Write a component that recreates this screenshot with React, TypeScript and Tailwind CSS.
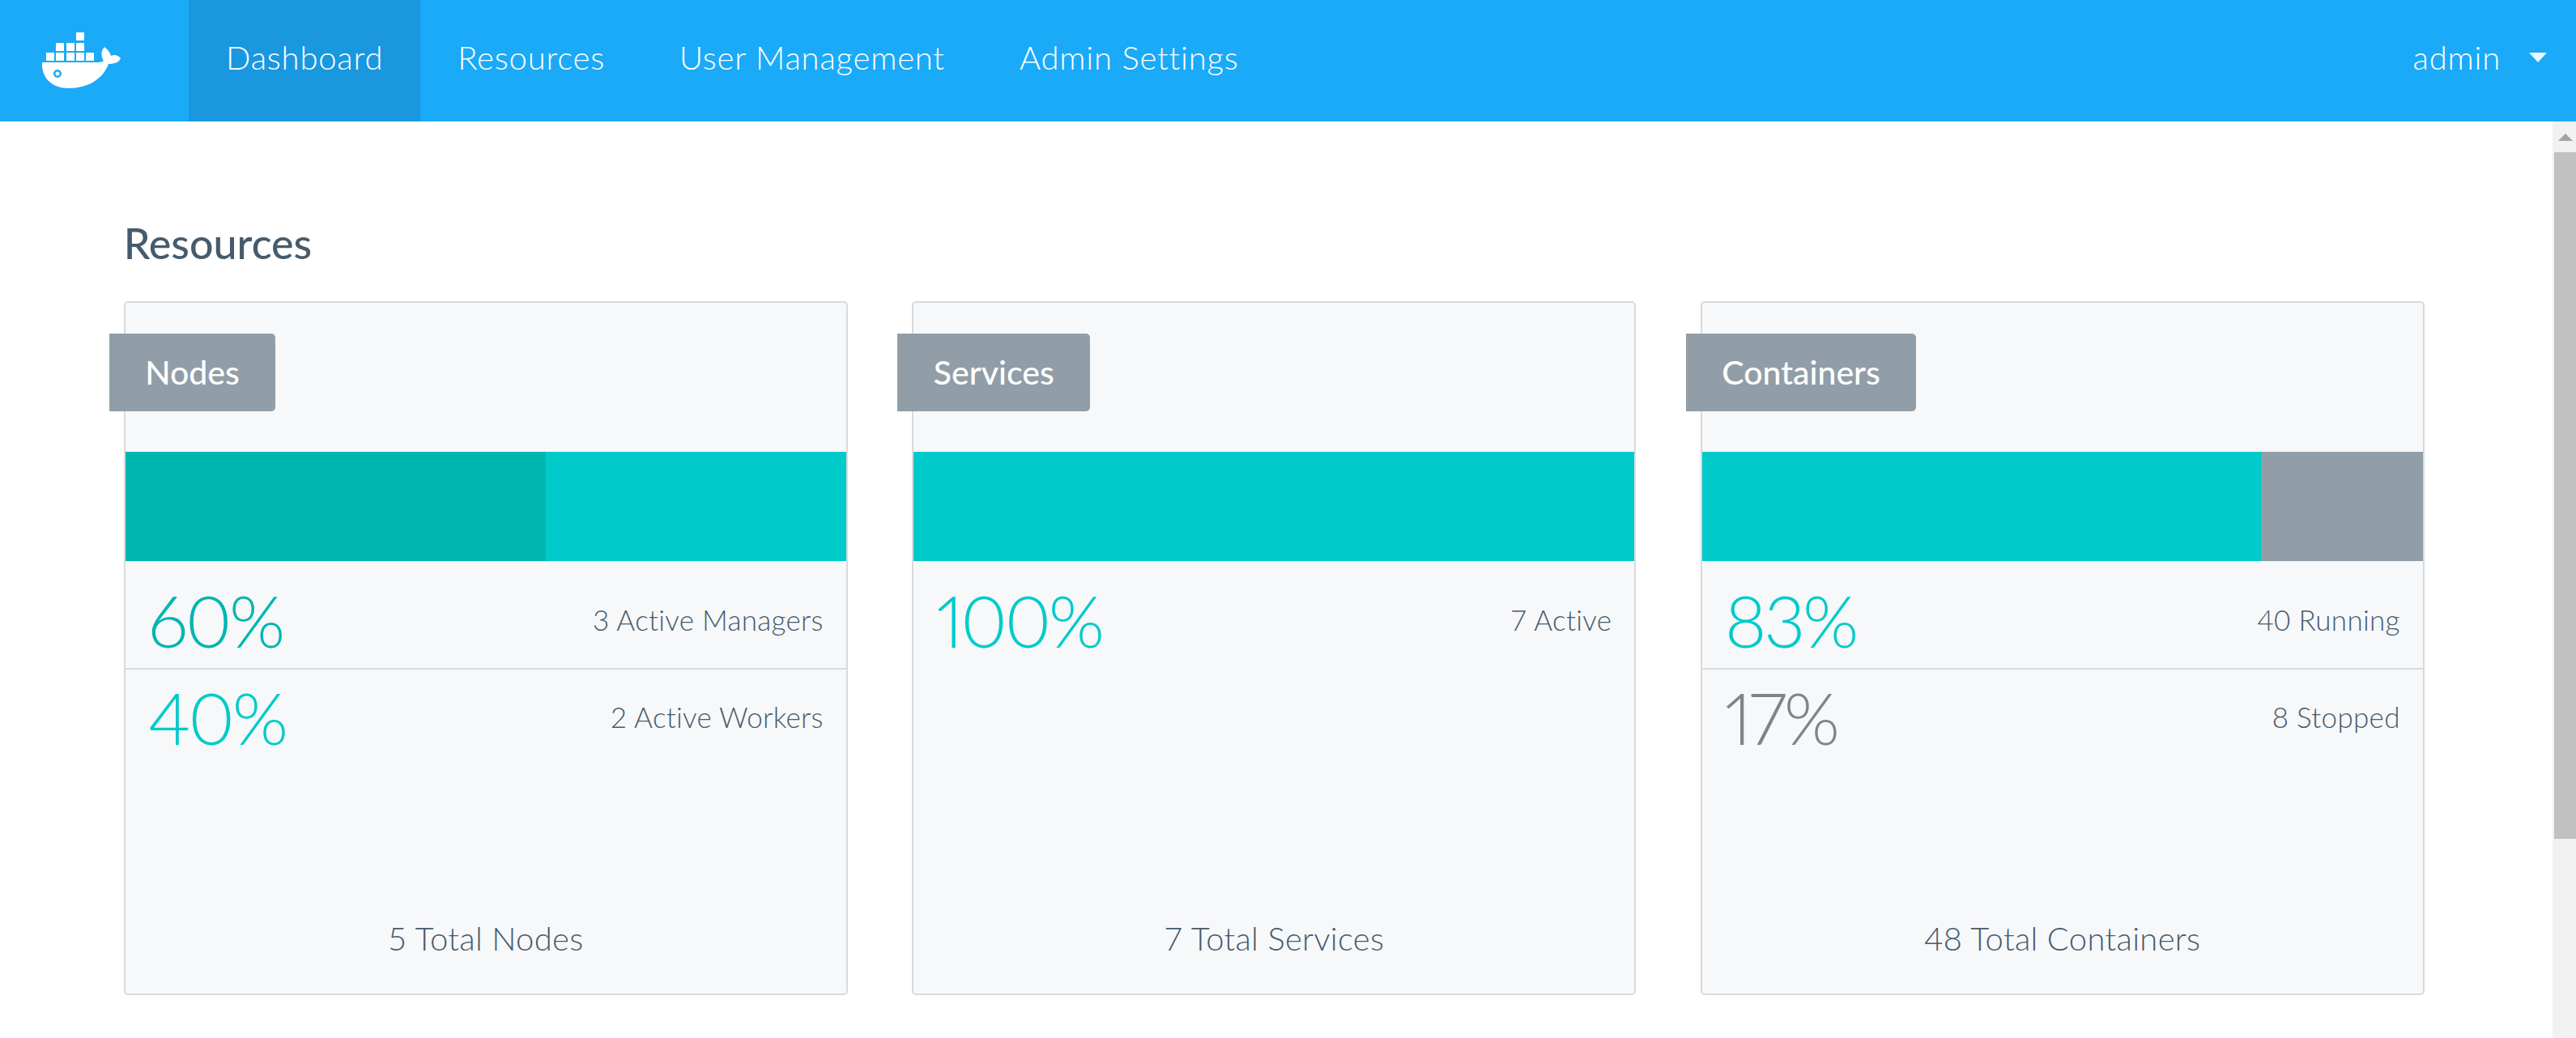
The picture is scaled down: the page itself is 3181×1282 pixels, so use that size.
const FONT = "font-['Lato','Noto_Sans',sans-serif]";

const NAV = ["Dashboard", "Resources", "User Management", "Admin Settings"];

const CARDS = [
  {
    title: "Nodes",
    total: "5 Total Nodes",
    bar: [
      { pct: 58.3, color: "bg-[#00b6b0]" },
      { pct: 41.7, color: "bg-[#00cbca]" },
    ],
    rows: [
      { value: "60%", label: "3 Active Managers", color: "text-[#00b6b0]" },
      { value: "40%", label: "2 Active Workers", color: "text-[#00cbca]" },
    ],
  },
  {
    title: "Services",
    total: "7 Total Services",
    bar: [{ pct: 100, color: "bg-[#00cbca]" }],
    rows: [{ value: "100%", label: "7 Active", color: "text-[#00cbca]" }],
  },
  {
    title: "Containers",
    total: "48 Total Containers",
    bar: [
      { pct: 77.5, color: "bg-[#00cbca]" },
      { pct: 22.5, color: "bg-[#919ea8]" },
    ],
    rows: [
      { value: "83%", label: "40 Running", color: "text-[#00cbca]" },
      { value: "17%", label: "8 Stopped", color: "text-[#7f8488]" },
    ],
  },
];

function DockerLogo() {
  const boxes = [
    [94, 36], [69, 49], [82, 49], [94, 49],
    [57, 61], [69, 61], [82, 61], [94, 61], [106, 61],
  ];
  return (
    <svg width="100" height="70" viewBox="52 36 98 70" fill="white" aria-label="Docker">
      {boxes.map(([x, y]) => (
        <rect key={`${x}-${y}`} x={x} y={y} width="10" height="10" />
      ))}
      <path
        fillRule="evenodd"
        d="M52 73 L120 73 C125 73 127 72 128 71 C124 65 125 58 129 54 C133 57 136 61 137 65 C141 63 146 64 149 68 C147 73 141 75 134 75 C127 94 108 105 85 105 C64 105 51 92 52 73 Z M71 82 A5 5 0 1 0 71 92 A5 5 0 1 0 71 82 Z"
      />
      <circle cx="71" cy="87" r="2.5" />
    </svg>
  );
}

function Navbar() {
  return (
    <header className="flex h-[150px] shrink-0 items-stretch bg-[#1aaaf8] text-white">
      <div className="flex w-[233px] items-center pl-[51px]">
        <DockerLogo />
      </div>
      {NAV.map((item, i) => (
        <a
          key={item}
          className={`flex items-center px-[46px] pb-[8px] text-[40px] font-light tracking-[0.8px] ${i === 0 ? "bg-[#1998e0]" : ""}`}
        >
          {item}
        </a>
      ))}
      <div className="ml-auto flex items-center pr-[36px] pb-[8px] text-[40px] font-light tracking-[0.8px]">
        admin
        <span className="ml-[35px] h-0 w-0 border-x-[11px] border-t-[12px] border-x-transparent border-t-[#e8f6fe]" />
      </div>
    </header>
  );
}

function Scrollbar() {
  return (
    <div className="flex w-[29px] shrink-0 flex-col bg-[#f1f1f1] pl-[2px]">
      <div className="flex h-[38px] items-center justify-center">
        <span className="h-0 w-0 border-x-[9px] border-b-[9px] border-x-transparent border-b-[#a3a3a3]" />
      </div>
      <div className="h-[848px] bg-[#c1c1c1]" />
    </div>
  );
}

function ResourceCard({ card }: { card: (typeof CARDS)[number] }) {
  return (
    <article className="flex h-[857px] w-[894px] flex-col rounded-[5px] border-2 border-[#d8dadc] bg-[#f7f8fa]">
      <div className="mt-[38px] -ml-[20px] flex h-[96px] w-fit items-center rounded-r-[5px] bg-[#919ea8] px-[44.5px] text-[41px] font-medium text-white">
        {card.title}
      </div>
      <div className="mt-[50px] flex h-[135px]">
        {card.bar.map((seg) => (
          <div key={seg.color} className={seg.color} style={{ width: `${seg.pct}%` }} />
        ))}
      </div>
      {card.rows.map((row, i) => (
        <div
          key={row.label}
          className={`flex items-start justify-between px-[28px] ${i === 0 ? "h-[132px] pt-[23px]" : "h-[120px] pt-[9px] border-t-2 border-[#d8dadc]"}`}
        >
          <span className={`text-[89px] leading-[100px] font-light tracking-[-3.5px] [font-variant-numeric:proportional-nums] ${row.color}`}>
            {row.value}
          </span>
          <span className="pt-[29px] text-[35px] leading-[40px] font-light tracking-[0.3px] text-[#465b6c]">
            {row.label}
          </span>
        </div>
      ))}
      <div className="mt-auto pb-[45px] text-center text-[40px] leading-[46px] font-light tracking-[0.3px] text-[#465b6c]">
        {card.total}
      </div>
    </article>
  );
}

export default function App() {
  return (
    <div className={`flex h-[1282px] w-[3181px] flex-col overflow-hidden bg-white ${FONT}`}>
      <Navbar />
      <div className="flex min-h-0 flex-1">
        <main className="flex-1 pl-[152.75px] pt-[120px]">
          <h1 className="mb-[2px] h-[100px] text-[52px] leading-[60px] font-medium text-[#465b6c]">Resources</h1>
          <div className="flex gap-[79.5px]">
            {CARDS.map((card) => (
              <ResourceCard key={card.title} card={card} />
            ))}
          </div>
        </main>
        <Scrollbar />
      </div>
    </div>
  );
}
